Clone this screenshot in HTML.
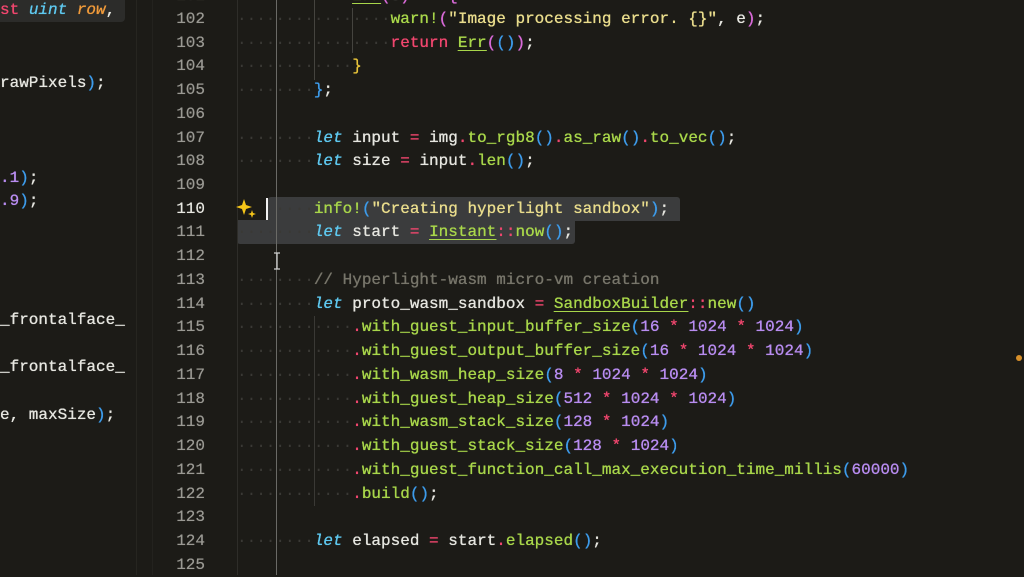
<!DOCTYPE html>
<html><head><meta charset="utf-8"><style>
html,body{margin:0;padding:0;}
body{width:1024px;height:575px;overflow:hidden;background:#1c1b17;position:relative;font-family:"Liberation Mono",monospace;font-size:16px;}
.r{position:absolute;height:24px;line-height:24px;white-space:pre;color:#e6e6e0;text-shadow:0 0 0.6px currentColor,0 0 0.3px currentColor;}
.n{position:absolute;left:150px;width:55px;text-align:right;height:24px;line-height:24px;color:#9a9993;text-shadow:0 0 0.5px currentColor;}
.vl{position:absolute;width:1px;}
.d{color:#3a3935;text-shadow:none}
.k{color:#5ec8ef;font-style:italic}
.f{color:#a8d64a}
.o{color:#f0466e}
.p{color:#3d9bea}
.y{color:#e8c43a}
.s{color:#e9dc8c}
.m{color:#b88cf0}
.c{color:#77756a}
.u{text-decoration:underline;text-decoration-color:#a8d64a;text-underline-offset:3px}
.pk{color:#d86ad8}
</style></head><body>
<div style="position:absolute;left:0;top:0;width:125px;height:22px;background:#2c2c2a;border-radius:0 0 4px 0;"></div>
<div class="vl" style="left:136px;top:0;height:575px;background:#262520"></div>
<div class="vl" style="left:152px;top:0;height:575px;background:#23221e"></div>
<div class="r" style="left:0;top:-2px"><span class="o">st</span> <span class="k">uint</span> <span style="color:#f09a3a;font-style:italic">row</span>,</div>
<div class="r" style="left:0;top:71px">rawPixels<span class="p">)</span>;</div>
<div class="r" style="left:0;top:166px"><span class="m">.1</span><span class="p">)</span>;</div>
<div class="r" style="left:0;top:189px"><span class="m">.9</span><span class="p">)</span>;</div>
<div class="r" style="left:0;top:308px">_frontalface_</div>
<div class="r" style="left:0;top:355px">_frontalface_</div>
<div class="r" style="left:0;top:403px">e, maxSize<span class="p">)</span>;</div>

<div style="position:absolute;left:268px;top:197px;width:412px;height:24px;background:#3b3c3d;border-radius:3px 3px 0 0"></div>
<div style="position:absolute;left:237px;top:220px;width:338px;height:24px;background:#3b3c3d;border-radius:0 0 3px 3px"></div>

<div class="vl" style="left:237px;top:0;height:575px;background:#2e2d29"></div>
<div class="vl" style="left:276px;top:0;height:575px;background:#6a6a66"></div>
<div class="vl" style="left:314px;top:0;height:80px;background:#45443f"></div>
<div class="vl" style="left:352px;top:8px;height:45px;background:#45443f"></div>
<div class="vl" style="left:314px;top:316px;height:190px;background:#3a3935"></div>
<div style="position:absolute;left:266px;top:198px;width:2px;height:22px;background:#f2f2f2"></div>
<svg style="position:absolute;left:236px;top:198px" width="22" height="22" viewBox="0 0 22 22">
<path d="M8 1 L10 7 L16 9 L10 11 L8 17 L6 11 L0 9 L6 7 Z" fill="#f5c518"/>
<path d="M16 12 L17 15 L20 16 L17 17 L16 20 L15 17 L12 16 L15 15 Z" fill="#f5c518"/>
</svg>
<svg style="position:absolute;left:273px;top:252px" width="8" height="18" viewBox="0 0 8 18">
<path d="M1 1 H7 M4 1 V17 M1 17 H7" stroke="#cfcfcf" stroke-width="1.3" fill="none"/>
</svg>
<div style="position:absolute;left:1016px;top:355px;width:6px;height:6px;border-radius:3px;background:#d8902a"></div>

<div class="n" style="top:-16px">101</div>
<div class="n" style="top:7px">102</div>
<div class="n" style="top:31px">103</div>
<div class="n" style="top:54px">104</div>
<div class="n" style="top:78px">105</div>
<div class="n" style="top:102px">106</div>
<div class="n" style="top:126px">107</div>
<div class="n" style="top:149px">108</div>
<div class="n" style="top:173px">109</div>
<div class="n" style="top:197px;color:#e8e8e2">110</div>
<div class="n" style="top:220px">111</div>
<div class="n" style="top:244px">112</div>
<div class="n" style="top:268px">113</div>
<div class="n" style="top:292px">114</div>
<div class="n" style="top:315px">115</div>
<div class="n" style="top:339px">116</div>
<div class="n" style="top:363px">117</div>
<div class="n" style="top:387px">118</div>
<div class="n" style="top:410px">119</div>
<div class="n" style="top:434px">120</div>
<div class="n" style="top:458px">121</div>
<div class="n" style="top:482px">122</div>
<div class="n" style="top:505px">123</div>
<div class="n" style="top:529px">124</div>
<div class="n" style="top:553px">125</div>

<div class="r" style="left:237px;top:-16px"><span class="d">············</span><span class="f u">Err</span><span class="pk">(</span>e<span class="pk">)</span> <span class="o">=&gt;</span> <span class="pk">{</span></div>
<div class="r" style="left:237px;top:7px"><span class="d">················</span><span class="f">warn!</span><span class="pk">(</span><span class="s">"Image processing error. {}"</span>, e<span class="pk">)</span>;</div>
<div class="r" style="left:237px;top:31px"><span class="d">················</span><span class="o">return</span> <span class="f u">Err</span><span class="pk">(</span><span class="p">()</span><span class="pk">)</span>;</div>
<div class="r" style="left:237px;top:54px"><span class="d">············</span><span class="y">}</span></div>
<div class="r" style="left:237px;top:78px"><span class="d">········</span><span class="p">}</span>;</div>
<div class="r" style="left:237px;top:126px"><span class="d">········</span><span class="k">let</span> input <span class="o">=</span> img<span class="o">.</span><span class="f">to_rgb8</span><span class="p">()</span><span class="o">.</span><span class="f">as_raw</span><span class="p">()</span><span class="o">.</span><span class="f">to_vec</span><span class="p">()</span>;</div>
<div class="r" style="left:237px;top:149px"><span class="d">········</span><span class="k">let</span> size <span class="o">=</span> input<span class="o">.</span><span class="f">len</span><span class="p">()</span>;</div>
<div class="r" style="left:237px;top:197px"><span class="d">    ····</span><span class="f">info!</span><span class="p">(</span><span class="s">"Creating hyperlight sandbox"</span><span class="p">)</span>;</div>
<div class="r" style="left:237px;top:220px"><span class="d">········</span><span class="k">let</span> start <span class="o">=</span> <span class="f u">Instant</span><span class="o">::</span><span class="f">now</span><span class="p">()</span>;</div>
<div class="r" style="left:237px;top:268px"><span class="d">········</span><span class="c">// Hyperlight-wasm micro-vm creation</span></div>
<div class="r" style="left:237px;top:292px"><span class="d">········</span><span class="k">let</span> proto_wasm_sandbox <span class="o">=</span> <span class="f u">SandboxBuilder</span><span class="o">::</span><span class="f">new</span><span class="p">()</span></div>
<div class="r" style="left:237px;top:315px"><span class="d">············</span><span class="o">.</span><span class="f">with_guest_input_buffer_size</span><span class="p">(</span><span class="m">16</span> <span class="o">*</span> <span class="m">1024</span> <span class="o">*</span> <span class="m">1024</span><span class="p">)</span></div>
<div class="r" style="left:237px;top:339px"><span class="d">············</span><span class="o">.</span><span class="f">with_guest_output_buffer_size</span><span class="p">(</span><span class="m">16</span> <span class="o">*</span> <span class="m">1024</span> <span class="o">*</span> <span class="m">1024</span><span class="p">)</span></div>
<div class="r" style="left:237px;top:363px"><span class="d">············</span><span class="o">.</span><span class="f">with_wasm_heap_size</span><span class="p">(</span><span class="m">8</span> <span class="o">*</span> <span class="m">1024</span> <span class="o">*</span> <span class="m">1024</span><span class="p">)</span></div>
<div class="r" style="left:237px;top:387px"><span class="d">············</span><span class="o">.</span><span class="f">with_guest_heap_size</span><span class="p">(</span><span class="m">512</span> <span class="o">*</span> <span class="m">1024</span> <span class="o">*</span> <span class="m">1024</span><span class="p">)</span></div>
<div class="r" style="left:237px;top:410px"><span class="d">············</span><span class="o">.</span><span class="f">with_wasm_stack_size</span><span class="p">(</span><span class="m">128</span> <span class="o">*</span> <span class="m">1024</span><span class="p">)</span></div>
<div class="r" style="left:237px;top:434px"><span class="d">············</span><span class="o">.</span><span class="f">with_guest_stack_size</span><span class="p">(</span><span class="m">128</span> <span class="o">*</span> <span class="m">1024</span><span class="p">)</span></div>
<div class="r" style="left:237px;top:458px"><span class="d">············</span><span class="o">.</span><span class="f">with_guest_function_call_max_execution_time_millis</span><span class="p">(</span><span class="m">60000</span><span class="p">)</span></div>
<div class="r" style="left:237px;top:482px"><span class="d">············</span><span class="o">.</span><span class="f">build</span><span class="p">()</span>;</div>
<div class="r" style="left:237px;top:529px"><span class="d">········</span><span class="k">let</span> elapsed <span class="o">=</span> start<span class="o">.</span><span class="f">elapsed</span><span class="p">()</span>;</div>
</body></html>
